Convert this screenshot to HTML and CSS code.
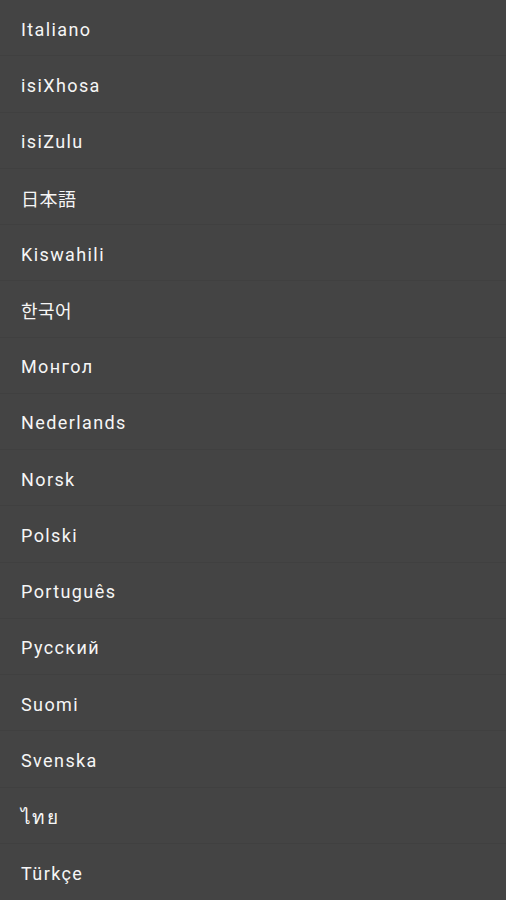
FILE: index.html
```html
<!DOCTYPE html>
<html lang="en">
<head>
    <meta charset="UTF-8">
    <meta name="viewport" content="width=device-width, initial-scale=1.0">
    <title>Language</title>
    <link rel="stylesheet" href="styles.css">
</head>
<body>
    <ul class="lang-list">
        <li class="lang-item">Italiano</li>
        <li class="lang-item">isiXhosa</li>
        <li class="lang-item">isiZulu</li>
        <li class="lang-item" lang="ja">日本語</li>
        <li class="lang-item">Kiswahili</li>
        <li class="lang-item" lang="ko">한국어</li>
        <li class="lang-item">Монгол</li>
        <li class="lang-item">Nederlands</li>
        <li class="lang-item">Norsk</li>
        <li class="lang-item">Polski</li>
        <li class="lang-item">Português</li>
        <li class="lang-item">Русский</li>
        <li class="lang-item">Suomi</li>
        <li class="lang-item">Svenska</li>
        <li class="lang-item" lang="th">ไทย</li>
        <li class="lang-item">Türkçe</li>
    </ul>
</body>
</html>
```

FILE: styles.css
```css
html, body {
    margin: 0;
    padding: 0;
    background: #444444;
    height: 100%;
    overflow: hidden;
}

body {
    font-family: Roboto, "Noto Sans", "Noto Sans CJK JP", "Noto Sans CJK KR", sans-serif;
    color: #f6f6f6;
}

.lang-list {
    list-style: none;
    margin: 0;
    padding: 0;
}

.lang-item {
    box-sizing: border-box;
    height: 56.25px;
    display: flex;
    align-items: center;
    padding: 3px 21px 0;
    font-size: 18px;
    letter-spacing: 1.4px;
    border-bottom: 1px solid #404040;
}

.lang-item:last-child {
    border-bottom: none;
}

.lang-item[lang="ja"],
.lang-item[lang="ko"] {
    letter-spacing: 0.5px;
}

.lang-item[lang="th"] {
    font-size: 19px;
}
```
